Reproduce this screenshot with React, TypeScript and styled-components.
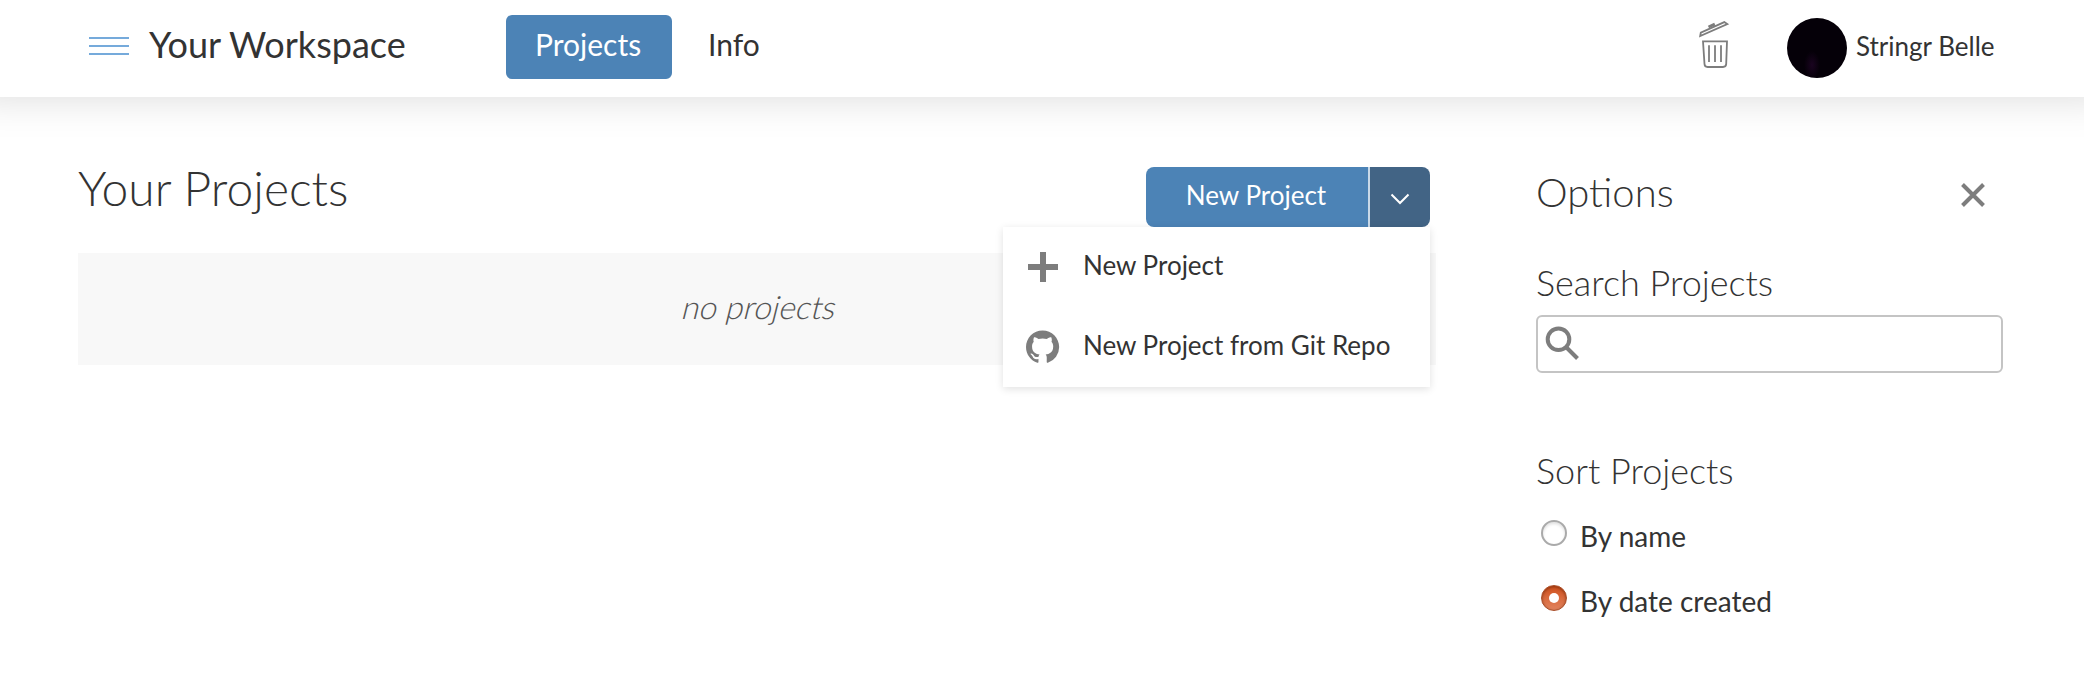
import React from 'react';
import styled, { createGlobalStyle, css } from 'styled-components';

const GlobalStyle = createGlobalStyle`
  * { box-sizing: border-box; }
  body {
    margin: 0;
    background: #fff;
    color: #333;
    font-family: Lato, "Liberation Sans", sans-serif;
  }
  h1, h2, h3, p { margin: 0; }
  button, input { font: inherit; }
`;

const Page = styled.div`
  height: 700px;
  overflow: hidden;
`;

const Header = styled.header`
  display: flex;
  align-items: flex-start;
  height: 97px;
  padding: 15px 0 0 89px;
  background: #fff;
  box-shadow: 0 -30px 40px 30px rgba(0, 0, 0, 0.15);
`;

const Hamburger = styled.button`
  display: flex;
  flex-direction: column;
  gap: 6px;
  width: 40px;
  margin: 22px 20px 0 0;
  padding: 0;
  border: 0;
  background: none;
`;

const HamburgerLine = styled.span`
  height: 2px;
  background: #75aadb;
`;

const WorkspaceTitle = styled.h1`
  width: 357px;
  font-size: 36px;
  font-weight: 400;
  line-height: 58px;
  white-space: nowrap;
`;

const Nav = styled.nav`
  display: flex;
  flex: 1;
`;

const NavLink = styled.a<{ $active?: boolean }>`
  height: 64px;
  padding: 0 29px;
  border-radius: 6px;
  font-size: 30px;
  line-height: 59px;
  ${({ $active }) =>
    $active &&
    css`
      width: 166px;
      margin-right: 7px;
      background: #4c83b6;
      color: #fff;
    `}
`;

const Trash = styled.svg`
  width: 34px;
  height: 50px;
  margin: 5px 56px 0 0;
`;

const Avatar = styled.span`
  width: 60px;
  height: 60px;
  margin: 3px 9px 0 0;
  border-radius: 50%;
  background: radial-gradient(ellipse 8px 14px at 25px 47px, #1a0420, #050008);
`;

const UserName = styled.span`
  width: 228px;
  font-size: 26px;
  line-height: 62px;
  white-space: nowrap;
`;

const Content = styled.div`
  display: flex;
  gap: 100px;
  padding: 70px 81px 0 78px;
`;

const Main = styled.main`
  width: 1358px;
`;

const MainHeader = styled.div`
  display: flex;
  justify-content: space-between;
  height: 86px;
  padding-right: 6px;
`;

const PageTitle = styled.h2`
  font-size: 48px;
  font-weight: 300;
  line-height: 42px;
`;

const SplitButton = styled.div`
  position: relative;
  display: flex;
  gap: 2px;
  height: 60px;
`;

const CreateButton = styled.button`
  width: 222px;
  padding: 0 2px 5px 0;
  border: 0;
  border-radius: 8px 0 0 8px;
  background: #4c83b6;
  box-shadow: 2px 0 #c9d9e8;
  color: #fff;
  font-size: 26px;
`;

const ToggleButton = styled.button`
  display: flex;
  align-items: center;
  justify-content: center;
  width: 60px;
  padding: 3px 0 0;
  border: 0;
  border-radius: 0 8px 8px 0;
  background: #426485;
`;

const Menu = styled.div`
  position: absolute;
  z-index: 1;
  top: 60px;
  right: 0;
  width: 427px;
  background: #fff;
  box-shadow: 0 2px 8px rgba(0, 0, 0, 0.12);
`;

const MenuItem = styled.div`
  display: flex;
  align-items: center;
  gap: 23px;
  height: 80px;
  padding-left: 23px;
  font-size: 26px;
  white-space: nowrap;
`;

const MenuLabel = styled.span`
  padding-bottom: 4px;
`;

const EmptyPanel = styled.div`
  height: 112px;
  background: #f8f8f8;
  color: #555;
  font-size: 32px;
  font-weight: 300;
  line-height: 107px;
  text-align: center;
`;

const Slanted = styled.span`
  display: inline-block;
  line-height: 40px;
  transform: skewX(-14deg);
  transform-origin: 50% 82%;
`;

const Options = styled.aside`
  flex: 1;
`;

const OptionsHeader = styled.div`
  display: flex;
  justify-content: space-between;
  height: 85px;
`;

const OptionsTitle = styled.h2`
  font-size: 40px;
  font-weight: 300;
  line-height: 50px;
`;

const CloseButton = styled.button`
  width: 24px;
  height: 24px;
  margin: 16px 18px 0 0;
  padding: 0;
  border: 0;
  background: none;
`;

const SectionTitle = styled.h3`
  font-size: 36px;
  font-weight: 300;
  line-height: 60px;
`;

const SearchBox = styled.label`
  display: flex;
  height: 58px;
  margin: 3px 0 67px;
  padding: 9px 7px;
  border: 2px solid #c4c4c4;
  border-radius: 6px;
`;

const SearchInput = styled.input`
  flex: 1;
  border: 0;
  outline: 0;
  background: none;
  font-size: 28px;
`;

const RadioRow = styled.div`
  display: flex;
  align-items: center;
  height: 65px;
  padding-left: 5px;
`;

const Radio = styled.span<{ $checked?: boolean }>`
  display: flex;
  align-items: center;
  justify-content: center;
  width: 26px;
  height: 26px;
  margin: 1px 13px 0 0;
  border: 2px solid #aaa;
  border-radius: 50%;
  box-shadow: inset 0 2px 3px rgba(0, 0, 0, 0.12);
  ${({ $checked }) =>
    $checked &&
    css`
      border: 1px solid #a84b25;
      background: linear-gradient(#d0501d, #e2845e);
      box-shadow: inset 0 1px 3px rgba(90, 30, 0, 0.6);
      &::after {
        content: '';
        width: 10px;
        height: 10px;
        border-radius: 50%;
        background: #fff;
      }
    `}
`;

const RadioLabel = styled.span`
  padding-top: 7px;
  font-size: 28px;
`;

const GITHUB_PATH =
  'M8 0C3.58 0 0 3.58 0 8c0 3.54 2.29 6.53 5.47 7.59.4.07.55-.17.55-.38 0-.19-.01-.82-.01-1.49-2.01.37-2.53-.49-2.69-.94-.09-.23-.48-.94-.82-1.13-.28-.15-.68-.52-.01-.53.63-.01 1.08.58 1.23.82.72 1.21 1.87.87 2.33.66.07-.52.28-.87.51-1.07-1.78-.2-3.64-.89-3.64-3.95 0-.87.31-1.59.82-2.15-.08-.2-.36-1.02.08-2.12 0 0 .67-.21 2.2.82.64-.18 1.32-.27 2-.27s1.36.09 2 .27c1.53-1.04 2.2-.82 2.2-.82.44 1.1.16 1.92.08 2.12.51.56.82 1.27.82 2.15 0 3.07-1.87 3.75-3.65 3.95.29.25.54.73.54 1.48 0 1.07-.01 1.93-.01 2.2 0 .21.15.46.55.38A8.01 8.01 0 0 0 16 8c0-4.42-3.58-8-8-8z';

export default function App() {
  return (
    <Page>
      <GlobalStyle />
      <Header>
        <Hamburger aria-label="Menu">
          <HamburgerLine />
          <HamburgerLine />
          <HamburgerLine />
        </Hamburger>
        <WorkspaceTitle>Your Workspace</WorkspaceTitle>
        <Nav>
          <NavLink $active>Projects</NavLink>
          <NavLink>Info</NavLink>
        </Nav>
        <Trash viewBox="0 0 34 50" fill="none" stroke="#7d7d7d" strokeWidth="1.8">
          <path d="M3.200 16 3.800 12.600 27.300 2.100 30.300 4.100Z" />
          <path d="M11.500 7 17.800 4.200" strokeWidth="3" />
          <path d="M6 21.300H30L29.200 44Q29 47 26 47H10.500Q7.700 47 7.500 44Z" />
          <path d="M12 25.300V42M18 25.300V42M24 25.300V42" />
        </Trash>
        <Avatar />
        <UserName>Stringr Belle</UserName>
      </Header>
      <Content>
        <Main>
          <MainHeader>
            <PageTitle>Your Projects</PageTitle>
            <SplitButton>
              <CreateButton>New Project</CreateButton>
              <ToggleButton aria-label="More">
                <svg width="20" height="12" fill="none" stroke="#fff" strokeWidth="2">
                  <path d="M1.500 1.500 10 10 18.500 1.500" />
                </svg>
              </ToggleButton>
              <Menu>
                <MenuItem>
                  <svg width="34" height="34" fill="#7d7d7d">
                    <path d="M14 2h6v12h12v6H20v12h-6V20H2v-6h12z" />
                  </svg>
                  <MenuLabel>New Project</MenuLabel>
                </MenuItem>
                <MenuItem>
                  <svg width="34" height="34" viewBox="0 -0.250 16.400 16.400" fill="#7d7d7d">
                    <path d={GITHUB_PATH} />
                  </svg>
                  <MenuLabel>New Project from Git Repo</MenuLabel>
                </MenuItem>
              </Menu>
            </SplitButton>
          </MainHeader>
          <EmptyPanel>
            <Slanted>no projects</Slanted>
          </EmptyPanel>
        </Main>
        <Options>
          <OptionsHeader>
            <OptionsTitle>Options</OptionsTitle>
            <CloseButton aria-label="Close">
              <svg width="24" height="24" stroke="#7d7d7d" strokeWidth="4">
                <path d="M1.500 1.500 22.500 22.500M22.500 1.500 1.500 22.500" />
              </svg>
            </CloseButton>
          </OptionsHeader>
          <SectionTitle>Search Projects</SectionTitle>
          <SearchBox>
            <svg width="34" height="35" fill="none" stroke="#7d7d7d" strokeWidth="4">
              <circle cx="13.500" cy="13.300" r="10.800" />
              <path d="M21.500 21.500 32.500 32.500" />
            </svg>
            <SearchInput aria-label="Search Projects" />
          </SearchBox>
          <SectionTitle>Sort Projects</SectionTitle>
          <RadioRow>
            <Radio />
            <RadioLabel>By name</RadioLabel>
          </RadioRow>
          <RadioRow>
            <Radio $checked />
            <RadioLabel>By date created</RadioLabel>
          </RadioRow>
        </Options>
      </Content>
    </Page>
  );
}
